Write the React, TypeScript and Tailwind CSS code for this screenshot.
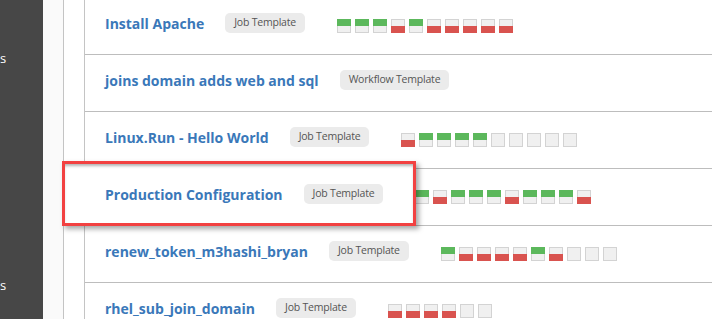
import React from 'react';

type Run = 'g' | 'r' | 'e';

const rows: { name: string; kind: string; runs: Run[] }[] = [
  { name: 'Install Apache', kind: 'Job Template', runs: ['g', 'g', 'g', 'r', 'g', 'r', 'r', 'r', 'r', 'r'] },
  { name: 'joins domain adds web and sql', kind: 'Workflow Template', runs: [] },
  { name: 'Linux.Run - Hello World', kind: 'Job Template', runs: ['r', 'g', 'g', 'g', 'g', 'e', 'e', 'e', 'e', 'e'] },
  { name: 'Production Configuration', kind: 'Job Template', runs: ['g', 'r', 'g', 'g', 'g', 'r', 'g', 'g', 'g', 'r'] },
  { name: 'renew_token_m3hashi_bryan', kind: 'Job Template', runs: ['g', 'r', 'r', 'r', 'r', 'g', 'r', 'e', 'e', 'e'] },
  { name: 'rhel_sub_join_domain', kind: 'Job Template', runs: ['r', 'r', 'r', 'r', 'e', 'e'] },
];

function RunBox({ run }: { run: Run }) {
  return (
    <div className="flex flex-col w-[14px] h-[14px]">
      {run === 'g' ? (
        <div className="h-[7px] bg-[#5cb85c]" />
      ) : (
        <div className="h-[7px] bg-[#f0f0f0] border-t border-x border-[#d3d3d3]" />
      )}
      {run === 'r' ? (
        <div className="h-[7px] bg-[#d9534f]" />
      ) : (
        <div className="h-[7px] bg-[#f0f0f0] border-b border-x border-[#d3d3d3]" />
      )}
    </div>
  );
}

export default function App() {
  return (
    <div
      className="relative w-[712px] h-[319px] overflow-hidden flex bg-white"
      style={{ fontFamily: '"Open Sans", "Noto Sans", sans-serif' }}
    >
      {/* sidebar, labels are clipped so only their last letter shows */}
      <div className="w-[43px] shrink-0 bg-[#474747] text-white text-[13px] leading-none">
        <div className="mt-[52px]">s</div>
        <div className="mt-[214px]">s</div>
      </div>
      <div className="w-[21px] shrink-0 bg-[#fafafa] border-r border-[#c4c4c4]" />
      <div className="w-[21px] shrink-0 bg-white border-r border-[#c4c4c4]" />

      {/* template list */}
      <div className="flex-1 -mt-[2px]">
        {rows.map((row) => (
          <div key={row.name} className="h-[57px] border-b border-[#bdbdbd] flex items-center pl-[20px]">
            <div className="relative z-10 flex items-center pb-[6px]">
              <span className="text-[14px] font-bold text-[#3a78b9] whitespace-nowrap">{row.name}</span>
              <span className="ml-[21px] h-[20px] px-[9px] flex items-center rounded-[5px] bg-[#ebebeb] text-[10.5px] tracking-[-0.2px] text-[#555] whitespace-nowrap">
                {row.kind}
              </span>
            </div>
            {row.runs.length > 0 && (
              <div className="ml-[32px] flex gap-[4px]">
                {row.runs.map((r, i) => (
                  <RunBox key={i} run={r} />
                ))}
              </div>
            )}
          </div>
        ))}
      </div>

      {/* annotation box */}
      <div className="absolute left-[62px] top-[161px] w-[354px] h-[65px] z-[5] bg-white border-[3px] border-[#f24141] shadow-[3px_3px_5px_rgba(0,0,0,0.35),inset_0_3px_3px_-1px_rgba(0,0,0,0.3)]" />
    </div>
  );
}
